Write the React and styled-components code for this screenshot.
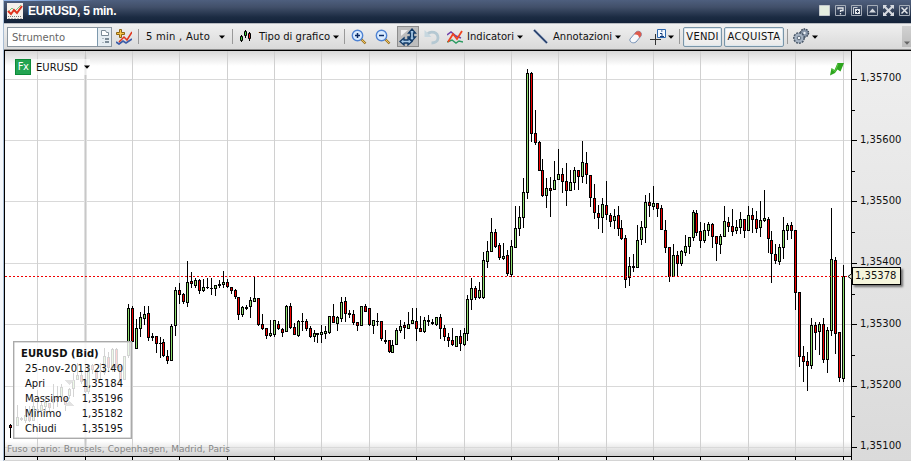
import React from "react";
import styled, { createGlobalStyle } from "styled-components";

const GlobalStyle = createGlobalStyle`
  * {
    box-sizing: border-box;
  }
  body {
    margin: 0;
    overflow: hidden;
    background: #eef3fa;
    font-family: "DejaVu Sans", Verdana, sans-serif;
    font-size: 10px;
    color: #111;
  }
  svg {
    display: block;
    flex-shrink: 0;
  }
`;

const Window = styled.div`
  width: 911px;
  height: 461px;
  display: flex;
  flex-direction: column;
  overflow: hidden;
  background: linear-gradient(90deg, #f4f7fb 3px, #a9bdd3 3px, #a9bdd3 4px, #fff 4px);
`;

const TitleBar = styled.div`
  height: 23px;
  margin-left: 4px;
  padding: 0 1px 1px 3px;
  display: flex;
  align-items: center;
  background: linear-gradient(90deg, #8fb2e6 20px, transparent 90px) 0 0 / 100% 1px no-repeat,
    linear-gradient(#4e5f7e, #42506a 30%, #1b2b42 75%, #14233a);
`;

const Title = styled.h1`
  flex: 1;
  margin: 0 0 1px 5px;
  font: bold 12px "Liberation Sans", Arial, sans-serif;
  letter-spacing: -0.27px;
  color: white;
`;

const WindowButtons = styled.div`
  display: flex;
  gap: 5px;
  padding-bottom: 1px;
`;

const Toolbar = styled.div`
  height: 27px;
  margin-left: 4px;
  padding-left: 3px;
  display: flex;
  align-items: center;
  border-top: 1px solid #b9bcc2;
  border-bottom: 1px solid #8b8b8b;
  background: linear-gradient(#f0f0f0, #d9d9d9);
`;

const Search = styled.div`
  width: 105px;
  height: 20px;
  display: flex;
  border: 1px solid #8a959f;
  background: white;
`;

const Placeholder = styled.span`
  flex: 1;
  padding-left: 4px;
  line-height: 19px;
  letter-spacing: 0.02px;
  color: #666;
`;

const SearchButton = styled.div`
  width: 14px;
  display: flex;
  align-items: center;
  justify-content: center;
  border-left: 1px solid #7d99ad;
  background: #e6edf2;
`;

const Item = styled.div`
  margin-left: ${(props) => props.$gap}px;
  width: ${(props) => props.$width}px;
  flex-shrink: 0;
  display: flex;
  justify-content: space-between;
  align-items: center;
  white-space: pre;
  letter-spacing: ${(props) => props.$spacing ?? 0}px;
`;

const Separator = styled.div`
  width: 1px;
  height: 15px;
  flex-shrink: 0;
  margin-left: ${(props) => props.$gap}px;
  background: #999;
`;

const Toggle = styled.div`
  width: 22px;
  height: 21px;
  margin-left: 6px;
  display: flex;
  align-items: center;
  justify-content: center;
  border: 1px solid #8c8c8c;
  background: #bdbdbd;
`;

const Trade = styled.button`
  width: ${(props) => props.$width}px;
  height: 20px;
  margin-left: ${(props) => props.$gap}px;
  padding: 0;
  flex-shrink: 0;
  border: 1px solid #7995a8;
  border-radius: 2px;
  background: linear-gradient(#fdfdfd, #e9e9e9);
  box-shadow: inset 0 0 0 1px #dde7ee;
  font: inherit;
  letter-spacing: ${(props) => props.$spacing}px;
  color: #111;
`;

const Overflow = styled.div`
  width: 9px;
  height: 21px;
  margin-left: auto;
  padding-bottom: 2px;
  display: flex;
  align-items: flex-end;
  justify-content: center;
  background: linear-gradient(#d2d2d2, #bcbcbc);
`;

const Chart = styled.div`
  position: relative;
  height: 411px;
`;

const Symbol = styled.div`
  position: absolute;
  left: 15px;
  top: 9px;
  height: 16px;
  display: flex;
  align-items: center;
  background: rgba(255, 255, 255, 0.6);
`;

const FxBadge = styled.span`
  width: 16px;
  height: 16px;
  margin-right: 5px;
  border: 1px solid #0c8a38;
  background: #23a452;
  font-size: 10px;
  line-height: 14px;
  text-align: center;
  letter-spacing: -0.5px;
  color: white;
`;

const SymbolName = styled.span`
  width: 48px;
`;

const Quote = styled.div`
  position: absolute;
  left: 13px;
  top: 291px;
  width: 119px;
  height: 98px;
  padding: 4px 7px 0;
  border: 1px solid #aaa;
  background: rgba(255, 255, 255, 0.83);
  box-shadow: inset 0 0 0 0.5px #bbb;
`;

const QuoteTitle = styled.div`
  height: 15px;
  line-height: 15px;
  font-weight: bold;
  letter-spacing: 0.05px;
`;

const QuoteRow = styled.div`
  height: 15px;
  padding: 0 1px 0 4px;
  display: flex;
  justify-content: space-between;
  line-height: 15px;
  white-space: nowrap;
  letter-spacing: ${(props) => props.$spacing ?? 0}px;
`;

const PriceTag = styled.div`
  position: absolute;
  left: 852px;
  top: 217px;
  width: 49px;
  height: 18px;
  padding-left: 2px;
  line-height: 16px;
  border: 1px solid black;
  background: #f5f5dc;
  box-shadow: 2px 2px 2px rgba(0, 0, 0, 0.5);
`;

const Arrow = ({ color = "#000" }) => (
  <svg width="6" height="4" viewBox="0 0 6 4">
    <path d="M0 0.5h6L3 3.8z" fill={color} />
  </svg>
);

const Icon = ({ size = 16, width, children }) => (
  <svg width={width ?? size} height={size} viewBox={`0 0 ${width ?? size} ${size}`} fill="none">
    {children}
  </svg>
);

const Magnifier = ({ plus }) => (
  <Icon>
    <path d="M10 10l4.5 4.5" stroke="#9b7426" strokeWidth="2.4" />
    <path d="M10.5 10.5l3.5 3.5" stroke="#f0c35b" />
    <circle cx="6.5" cy="6.5" r="5.2" fill="#d9ebff" stroke="#4f83d3" strokeWidth="1.4" />
    <path d={plus ? "M4 6.5h5M6.5 4v5" : "M4 6.5h5"} stroke="#0c2c66" strokeWidth="1.5" />
  </Icon>
);

// x, high, low, body top, body bottom, rising
const candles = [
  [10, 424, 438, 425, 428, 0],
  [17, 405, 426, 417, 426, 1],
  [21, 417, 421, 418, 420, 1],
  [25, 406, 423, 415, 421, 1],
  [29, 406, 422, 415, 421, 0],
  [33, 397, 421, 406, 421, 1],
  [37, 390, 413, 409, 411, 0],
  [41, 402, 412, 405, 411, 1],
  [45, 396, 413, 402, 407, 1],
  [49, 403, 412, 403, 408, 0],
  [53, 384, 409, 399, 403, 1],
  [57, 386, 407, 396, 401, 0],
  [61, 384, 398, 387, 397, 1],
  [65, 398, 411, 398, 405, 0],
  [69, 388, 399, 389, 396, 1],
  [73, 373, 397, 380, 389, 1],
  [77, 363, 380, 375, 380, 1],
  [81, 370, 384, 375, 382, 0],
  [85, 364, 393, 380, 392, 0],
  [88, 365, 394, 365, 392, 1],
  [92, 364, 374, 365, 370, 0],
  [96, 370, 381, 370, 379, 0],
  [100, 363, 380, 370, 372, 1],
  [104, 348, 375, 356, 373, 1],
  [108, 352, 370, 357, 368, 0],
  [112, 348, 372, 349, 368, 1],
  [116, 348, 368, 349, 368, 0],
  [120, 366, 381, 366, 380, 0],
  [124, 356, 380, 356, 380, 1],
  [128, 304, 358, 308, 356, 1],
  [132, 306, 342, 308, 342, 0],
  [136, 319, 349, 328, 349, 1],
  [140, 312, 337, 317, 329, 1],
  [144, 306, 325, 314, 319, 1],
  [148, 306, 341, 313, 338, 0],
  [152, 333, 341, 336, 338, 0],
  [156, 336, 353, 336, 344, 0],
  [160, 337, 358, 343, 344, 0],
  [163, 339, 357, 342, 356, 0],
  [167, 350, 364, 356, 361, 0],
  [171, 324, 361, 326, 361, 1],
  [175, 287, 336, 290, 326, 1],
  [179, 283, 304, 290, 295, 0],
  [183, 293, 304, 294, 302, 0],
  [187, 261, 307, 282, 303, 1],
  [191, 272, 288, 281, 284, 0],
  [195, 278, 288, 280, 286, 1],
  [199, 279, 294, 280, 291, 0],
  [203, 279, 292, 287, 291, 1],
  [207, 278, 289, 287, 288, 0],
  [211, 278, 295, 288, 289, 0],
  [215, 285, 296, 285, 289, 1],
  [219, 280, 288, 284, 286, 1],
  [223, 271, 288, 282, 285, 1],
  [227, 279, 288, 282, 287, 0],
  [231, 287, 294, 287, 291, 0],
  [235, 289, 299, 290, 297, 0],
  [238, 297, 320, 297, 315, 0],
  [242, 306, 317, 307, 315, 1],
  [246, 305, 310, 307, 309, 0],
  [250, 297, 318, 300, 307, 1],
  [254, 277, 302, 298, 302, 1],
  [258, 298, 326, 298, 325, 0],
  [262, 314, 330, 324, 329, 0],
  [266, 328, 339, 328, 336, 0],
  [270, 320, 337, 333, 336, 1],
  [274, 320, 337, 320, 335, 1],
  [278, 321, 330, 324, 329, 0],
  [282, 328, 337, 329, 333, 0],
  [286, 305, 332, 306, 332, 1],
  [290, 303, 329, 306, 328, 0],
  [294, 323, 335, 327, 335, 0],
  [298, 320, 337, 321, 336, 1],
  [302, 313, 331, 321, 322, 0],
  [306, 319, 331, 321, 329, 0],
  [310, 326, 338, 328, 337, 0],
  [314, 330, 342, 333, 337, 1],
  [317, 333, 343, 333, 335, 0],
  [321, 325, 343, 332, 335, 1],
  [325, 326, 339, 331, 334, 1],
  [329, 316, 334, 316, 333, 1],
  [333, 304, 323, 316, 323, 0],
  [337, 316, 331, 317, 324, 1],
  [341, 297, 322, 302, 319, 1],
  [345, 297, 322, 301, 314, 0],
  [349, 310, 318, 313, 315, 0],
  [353, 310, 325, 314, 323, 0],
  [357, 322, 331, 322, 326, 0],
  [361, 306, 326, 306, 326, 1],
  [365, 304, 312, 306, 312, 0],
  [369, 308, 326, 308, 325, 0],
  [373, 320, 334, 320, 326, 1],
  [377, 313, 326, 321, 322, 0],
  [381, 321, 341, 321, 339, 0],
  [385, 330, 344, 340, 342, 0],
  [389, 340, 353, 340, 352, 0],
  [392, 340, 353, 345, 353, 1],
  [396, 328, 345, 330, 345, 1],
  [400, 320, 333, 326, 331, 1],
  [404, 322, 339, 325, 328, 0],
  [408, 312, 329, 324, 329, 1],
  [412, 308, 324, 320, 324, 1],
  [416, 308, 341, 321, 329, 0],
  [420, 316, 332, 328, 332, 0],
  [424, 317, 333, 320, 332, 1],
  [428, 315, 326, 320, 322, 0],
  [432, 319, 325, 322, 324, 0],
  [436, 317, 326, 317, 325, 1],
  [440, 314, 339, 317, 329, 0],
  [444, 325, 341, 328, 337, 0],
  [448, 333, 347, 337, 341, 0],
  [452, 328, 346, 340, 345, 0],
  [456, 336, 347, 336, 347, 1],
  [460, 330, 351, 336, 344, 0],
  [464, 328, 346, 333, 345, 1],
  [467, 295, 341, 299, 334, 1],
  [471, 278, 310, 288, 300, 1],
  [475, 286, 300, 288, 298, 0],
  [479, 282, 299, 290, 298, 1],
  [483, 252, 299, 260, 298, 1],
  [487, 241, 268, 251, 262, 1],
  [491, 218, 252, 232, 252, 1],
  [495, 229, 248, 232, 247, 0],
  [499, 243, 260, 245, 258, 0],
  [503, 243, 260, 256, 259, 1],
  [507, 250, 276, 255, 274, 0],
  [511, 240, 277, 246, 275, 1],
  [515, 206, 248, 228, 248, 1],
  [519, 206, 236, 217, 229, 1],
  [523, 178, 228, 192, 218, 1],
  [527, 69, 199, 73, 193, 1],
  [531, 72, 142, 73, 134, 0],
  [535, 110, 145, 133, 143, 0],
  [539, 141, 171, 142, 171, 0],
  [542, 159, 197, 170, 196, 0],
  [546, 178, 208, 188, 196, 1],
  [550, 177, 217, 188, 191, 0],
  [554, 161, 190, 180, 190, 1],
  [558, 149, 180, 174, 180, 1],
  [562, 168, 193, 174, 182, 0],
  [566, 163, 206, 181, 191, 0],
  [570, 170, 191, 182, 191, 1],
  [574, 167, 190, 170, 183, 1],
  [578, 170, 190, 170, 177, 0],
  [582, 141, 183, 162, 177, 1],
  [586, 152, 184, 163, 175, 0],
  [590, 175, 207, 175, 198, 0],
  [594, 184, 219, 198, 213, 0],
  [598, 205, 229, 213, 218, 0],
  [602, 198, 233, 204, 218, 1],
  [606, 181, 220, 205, 215, 0],
  [610, 213, 227, 215, 222, 0],
  [614, 209, 229, 216, 221, 1],
  [618, 206, 236, 215, 229, 0],
  [621, 220, 240, 228, 239, 0],
  [625, 235, 288, 238, 280, 0],
  [629, 257, 286, 266, 278, 1],
  [633, 254, 272, 266, 268, 0],
  [637, 225, 268, 240, 268, 1],
  [641, 221, 245, 227, 240, 1],
  [645, 195, 243, 202, 228, 1],
  [649, 193, 217, 202, 206, 0],
  [653, 186, 210, 203, 207, 1],
  [657, 203, 217, 203, 209, 0],
  [661, 205, 230, 208, 230, 0],
  [665, 220, 253, 230, 248, 0],
  [669, 247, 282, 247, 277, 0],
  [673, 244, 277, 255, 277, 1],
  [677, 251, 277, 255, 264, 0],
  [681, 250, 266, 251, 264, 1],
  [685, 235, 256, 246, 253, 1],
  [689, 237, 254, 237, 247, 1],
  [693, 210, 241, 212, 238, 1],
  [696, 210, 236, 213, 233, 0],
  [700, 222, 248, 231, 241, 0],
  [704, 223, 243, 230, 241, 1],
  [708, 222, 236, 224, 231, 1],
  [712, 223, 248, 224, 237, 0],
  [716, 236, 261, 236, 244, 0],
  [720, 234, 254, 236, 245, 1],
  [724, 206, 237, 221, 237, 1],
  [728, 217, 232, 222, 227, 0],
  [732, 209, 236, 226, 232, 0],
  [736, 220, 234, 227, 231, 1],
  [740, 212, 234, 219, 228, 1],
  [744, 219, 238, 219, 231, 0],
  [748, 206, 231, 215, 231, 1],
  [752, 208, 233, 215, 220, 0],
  [756, 211, 233, 219, 229, 0],
  [760, 201, 237, 220, 228, 1],
  [764, 190, 222, 218, 221, 1],
  [768, 217, 253, 219, 239, 0],
  [771, 231, 283, 240, 254, 0],
  [775, 244, 264, 254, 261, 0],
  [779, 244, 265, 247, 262, 1],
  [783, 217, 259, 230, 248, 1],
  [787, 223, 240, 225, 231, 1],
  [791, 222, 239, 225, 231, 0],
  [795, 230, 310, 230, 293, 0],
  [799, 292, 367, 292, 357, 0],
  [803, 346, 382, 356, 362, 0],
  [807, 352, 391, 361, 366, 0],
  [811, 318, 369, 325, 366, 1],
  [815, 322, 350, 325, 333, 0],
  [819, 322, 355, 324, 332, 1],
  [823, 318, 363, 324, 360, 0],
  [827, 327, 373, 330, 360, 1],
  [831, 208, 336, 259, 331, 1],
  [835, 257, 354, 260, 334, 0],
  [839, 332, 382, 332, 378, 0],
  [843, 265, 382, 276, 379, 1],
];

const timeLines = [37, 132, 179, 227, 274, 321, 369, 416, 464, 511, 558, 606, 653, 700, 748, 795, 843];

// y, label baseline, label
const priceLines = [
  [79, 81, "1,35700"],
  [140, 143, "1,35600"],
  [201, 204, "1,35500"],
  [263, 265, "1,35400"],
  [324, 327, "1,35300"],
  [386, 388, "1,35200"],
  [447, 449, "1,35100"],
];

const minorTicks = [110, 171, 232, 294, 355, 416];

const quote = [
  ["Apri", "1,35184"],
  ["Massimo", "1,35196"],
  ["Minimo", "1,35182"],
  ["Chiudi", "1,35195"],
];

const Candle = ({ x, high, low, top, bottom, up }) => (
  <g>
    <rect x={x} y={high} width="1" height={low - high} fill="#000" />
    <rect x={x - 1} y={top} width="3" height={bottom - top} fill="#000" />
    {bottom - top > 2 && (
      <rect x={x} y={top + 1} width="1" height={bottom - top - 2} fill={up ? "#90e070" : "#f00000"} />
    )}
  </g>
);

const Plot = () => (
  <svg width="911" height="411" viewBox="0 50 911 411" shapeRendering="crispEdges">
    <defs>
      <linearGradient id="topShade" x2="0" y2="1">
        <stop stopColor="#d8d8d8" />
        <stop offset="1" stopColor="#fff" />
      </linearGradient>
      <linearGradient id="bottomShade" x2="0" y2="1">
        <stop stopColor="#fff" />
        <stop offset="1" stopColor="#d0d0d0" />
      </linearGradient>
      <linearGradient id="axisShade" x2="0" y2="1">
        <stop stopColor="#efefef" />
        <stop offset="1" stopColor="#dadada" />
      </linearGradient>
    </defs>
    <rect x="4" y="50" width="907" height="411" fill="#fff" />
    <rect x="5" y="51" width="846" height="15" fill="url(#topShade)" />
    <rect x="5" y="441" width="846" height="15" fill="url(#bottomShade)" />
    <rect x="5" y="457" width="847" height="3" fill="#ececec" />
    <rect x="852" y="51" width="59" height="409" fill="url(#axisShade)" />
    <rect x="4" y="460" width="907" height="1" fill="#d4d4d4" />
    {priceLines.map(([y]) => (
      <rect key={y} x="5" y={y} width="846" height="1" fill="#d9d9d9" />
    ))}
    {timeLines.map((x) => (
      <rect key={x} x={x} y="51" width="1" height="405" fill="#d0d0d0" />
    ))}
    <rect x="84" y="51" width="3" height="405" fill="#e0e0e0" />
    <rect x="85" y="51" width="1" height="405" fill="#c8c8c8" />
    {candles.map(([x, high, low, top, bottom, up]) => (
      <Candle key={x} x={x} high={high} low={low} top={top} bottom={bottom} up={up} />
    ))}
    <path d="M65 380h9l-4.500 5zM65 406h9l-4.500 -5z" fill="#555" />
    <path d="M5 276.500H848" stroke="#f00000" strokeDasharray="2 2" />
    <path d="M4 50.500H911M4.500 50V460M851.500 50V460M4 456.500H852" stroke="#000" />
    {[...timeLines, 85].map((x) => (
      <rect key={x} x={x} y="457" width="1" height="3" fill="#000" />
    ))}
    {priceLines.map(([y, baseline, label]) => (
      <g key={y}>
        <rect x="852" y={y} width="5" height="1" fill="#000" />
        <text x="860" y={baseline} fontSize="10" fill="#111">
          {label}
        </text>
      </g>
    ))}
    {minorTicks.map((y) => (
      <rect key={y} x="852" y={y} width="3" height="1" fill="#000" />
    ))}
    <text x="7" y="452" fontSize="9" fill="#858585" textLength="223">
      Fuso orario: Brussels, Copenhagen, Madrid, Paris
    </text>
    <g shapeRendering="auto">
      <path d="M830 75.500l1.500-7.500 3 2 3-7h6.500l-3.500 8.500-3-2-2.500 3.500z" fill="#2da51e" />
      <path d="M832 69.500l3 2 3-7.500" stroke="#5cc946" fill="none" />
      <path d="M848 276.500l4-3v6z" fill="#f5f5dc" stroke="#000" />
    </g>
  </svg>
);

const App = () => {
  return (
    <Window>
      <GlobalStyle />
      <TitleBar>
        <Icon>
          <path d="M0 0h16v16H0z" fill="#f5f1ec" />
          <path d="M1 9l4-4 3 3 6-6" stroke="#7fc57f" />
          <path d="M1 8l3 3 3-4 3 3 5-7" stroke="#e0311c" strokeWidth="2" />
          <path d="M1 13.500h14" stroke="#777" strokeDasharray="1 1" />
          <path d="M1 15.500h14" stroke="#b5b5b5" strokeDasharray="2 1" />
        </Icon>
        <Title>EURUSD, 5 min.</Title>
        <WindowButtons>
          <Icon size={11}>
            <path d="M0.500 0.500h10v10h-10z" fill="#e5eee0" stroke="#c4c9cc" />
          </Icon>
          <Icon size={11}>
            <path d="M0.500 0.500h10v10h-10z" stroke="#a5adb8" />
            <path d="M3 4.500V3h5v2.500H5.500V7M5.500 8v1.500" stroke="#e2e5e9" strokeWidth="1.300" />
          </Icon>
          <Icon size={11}>
            <path d="M0.500 0.500h10v10h-10z" stroke="#a5adb8" />
            <path d="M2.500 9V2.500h4" stroke="#c8ced6" />
            <path d="M4 4h5v5H4z" fill="#e2e5e9" />
            <path d="M5 6.500h3M6.500 5v3" stroke="#26344b" />
          </Icon>
          <Icon size={11}>
            <path d="M0.500 0.500h10v10h-10z" stroke="#a5adb8" />
            <path d="M2 7.500l3.500-4 3.500 4z" fill="#d4d8de" />
          </Icon>
          <Icon size={11}>
            <path d="M0 0h4L3 1.500 5.500 4 8 1.500 7 0h4v4L9.500 3 7 5.500 9.500 8 11 7v4H7l1-1.500L5.500 7 3 9.500 4 11H0V7l1.500 1L4 5.500 1.500 3 0 4z" fill="#d4d8de" />
          </Icon>
          <Icon size={11}>
            <path d="M0.500 0.500h10v10h-10z" stroke="#a5adb8" />
            <path d="M2.500 2.500l6 6M8.500 2.500l-6 6" stroke="#e2e5e9" strokeWidth="1.500" />
          </Icon>
        </WindowButtons>
      </TitleBar>
      <Toolbar>
        <Search>
          <Placeholder>Strumento</Placeholder>
          <SearchButton>
            <Icon size={14} width={8}>
              <path d="M0.500 0.500h4l1 2h2v3h-7z" fill="#fff" stroke="#7c8b97" />
              <path d="M1.500 8.500h1M1.500 12.500h1" stroke="#7c8b97" />
              <path d="M4 8h4v2H4zM4 11h4v2H4z" fill="#7c8b97" />
            </Icon>
          </SearchButton>
        </Search>
        <Item $gap={4} $width={16}>
          <Icon>
            <path d="M0 13l3 2 4-3 3 2 6-4" stroke="#3c5ca8" strokeWidth="1.800" />
            <path d="M3 13l5-5 3 3 5-8" stroke="#e0351c" strokeWidth="1.500" />
            <path d="M3.500 0.500h2v3h3v2h-3v3h-2v-3h-3v-2h3z" fill="#f7c447" stroke="#8d6413" />
          </Icon>
        </Item>
        <Separator $gap={6} />
        <Item $gap={7} $width={79} $spacing={0.25}>
          5 min , Auto <Arrow />
        </Item>
        <Separator $gap={7} />
        <Item $gap={7} $width={12}>
          <Icon size={13} width={12}>
            <path d="M1.500 5v7M5.500 0v8M9.500 2v9" stroke="#000" />
            <path d="M0.500 6.500h2v4h-2z" fill="#41d03a" stroke="#000" />
            <path d="M4.500 1.500h2v4h-2z" fill="#41d03a" stroke="#000" />
            <path d="M8.500 3.500h2v5h-2z" fill="#e01b1b" stroke="#000" />
          </Icon>
        </Item>
        <Item $gap={7} $width={80} $spacing={0}>
          Tipo di grafico <Arrow />
        </Item>
        <Separator $gap={5} />
        <Item $gap={6} $width={16}>
          <Magnifier plus />
        </Item>
        <Item $gap={8} $width={16}>
          <Magnifier />
        </Item>
        <Toggle>
          <Icon size={18} width={18}>
            <path d="M2 8V2h7z" fill="#eee" />
            <path d="M13 1l3.500 4H14.500v4h2L13 13 9.500 9h2V5h-2z" fill="#a9cbe8" stroke="#123a67" strokeWidth="1.300" />
            <path d="M1 13.500L5 10v2h4v-2l4 3.500L9 17v-2H5v2z" fill="#a9cbe8" stroke="#123a67" strokeWidth="1.300" />
          </Icon>
        </Toggle>
        <Item $gap={5} $width={16}>
          <Icon>
            <path d="M3.500 5C7 1.500 14 3 14 9c0 3-3 5-6.500 5" stroke="#b5c8d2" strokeWidth="2.800" />
            <path d="M0.500 1v7h7z" fill="#c7d7df" />
          </Icon>
        </Item>
        <Item $gap={7} $width={16}>
          <Icon>
            <path d="M0 13l5-2 4 3 3-2 4 1" stroke="#2c9b62" strokeWidth="1.500" />
            <path d="M0 6l4-3 5 4 5 2" stroke="#7042a8" strokeWidth="1.500" />
            <path d="M1 13l5-8 4 5 5-8" stroke="#f04420" strokeWidth="1.800" />
          </Icon>
        </Item>
        <Item $gap={4} $width={56}>
          Indicatori <Arrow />
        </Item>
        <Item $gap={10} $width={15}>
          <Icon size={15}>
            <path d="M1 1l13 13" stroke="#b7c1d4" strokeWidth="3" />
            <path d="M1 1l13 13" stroke="#1d3765" strokeWidth="1.600" />
          </Icon>
        </Item>
        <Item $gap={5} $width={67} $spacing={0.02}>
          Annotazioni <Arrow />
        </Item>
        <Item $gap={9} $width={14}>
          <Icon size={14}>
            <path d="M1 9l6-7c2-2 7 0 5 4l-5 6c-3 2-7 0-6-3z" fill="#f6f8fb" stroke="#7490b5" />
            <path d="M7 2c2-2 7 0 5 4L10 8C10 5 8 4 5 4.500z" fill="#df5b4c" />
          </Icon>
        </Item>
        <Item $gap={7} $width={24}>
          <Icon size={17} width={17}>
            <path d="M0 11.500h11M5.500 6v11" stroke="#333" />
            <path d="M7.500 1.500h8v8h-8z" fill="#f0f7ff" stroke="#2c67ad" />
            <path d="M11 3h1.500M10 5.500h2v3M10 8.500h4" stroke="#173f7c" />
          </Icon>
          <Arrow />
        </Item>
        <Separator $gap={5} />
        <Trade $gap={3} $width={39} $spacing={0.2}>VENDI</Trade>
        <Trade $gap={2} $width={60} $spacing={0.32}>ACQUISTA</Trade>
        <Separator $gap={3} />
        <Item $gap={5} $width={25}>
          <Icon size={17} width={17}>
            <circle cx="11.500" cy="5" r="4" fill="#8795a8" stroke="#3d4958" strokeDasharray="1.500 1" strokeWidth="1.500" />
            <circle cx="6" cy="10" r="5.200" fill="#a5b2c2" stroke="#4a5869" strokeDasharray="2 1" strokeWidth="1.500" />
            <circle cx="6" cy="10" r="1.800" fill="#edf1f5" stroke="#5b6979" />
            <circle cx="11.500" cy="5" r="1.200" fill="#edf1f5" />
          </Icon>
          <Arrow />
        </Item>
        <Overflow>
          <Arrow color="#666" />
        </Overflow>
      </Toolbar>
      <Chart>
        <Plot />
        <Symbol>
          <FxBadge>Fx</FxBadge>
          <SymbolName>EURUSD</SymbolName>
          <Arrow />
        </Symbol>
        <Quote>
          <QuoteTitle>EURUSD (Bid)</QuoteTitle>
          <QuoteRow $spacing={0.18}>25-nov-2013 23.40</QuoteRow>
          {quote.map(([name, value]) => (
            <QuoteRow key={name}>
              <span>{name}</span>
              <span>{value}</span>
            </QuoteRow>
          ))}
        </Quote>
        <PriceTag>1,35378</PriceTag>
      </Chart>
    </Window>
  );
};

export default App;
